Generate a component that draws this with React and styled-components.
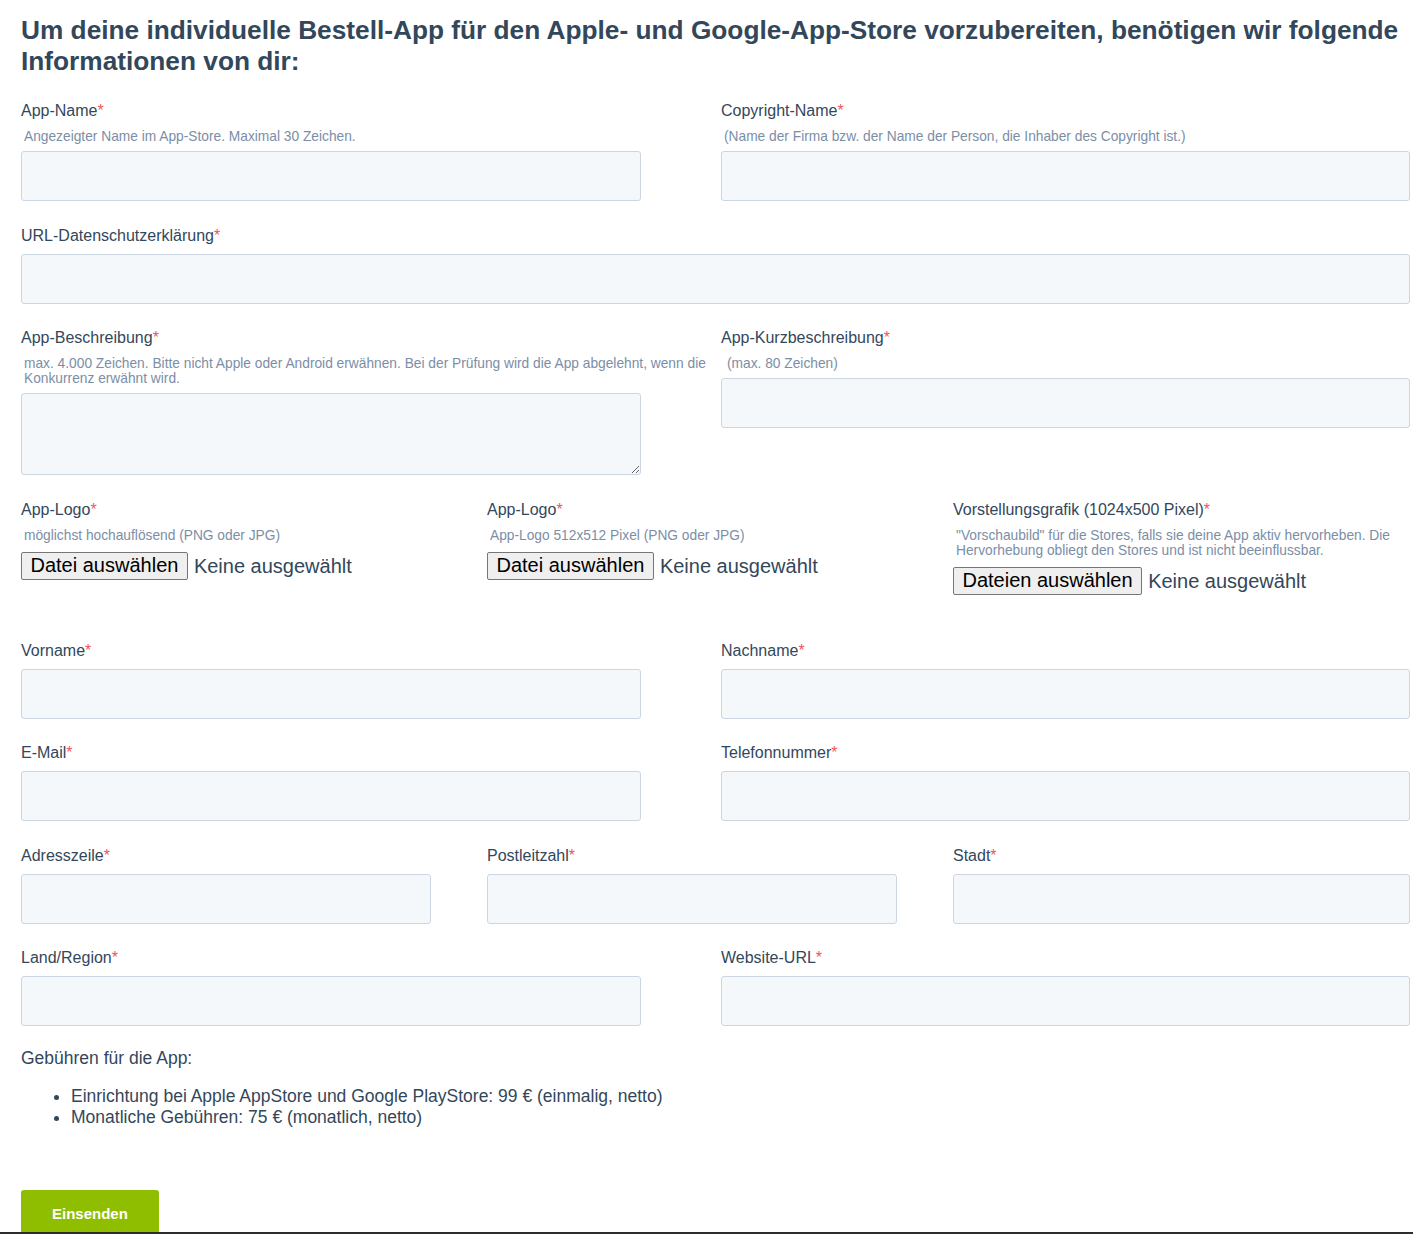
import React from 'react';
import styled, { createGlobalStyle } from 'styled-components';

const GlobalStyle = createGlobalStyle`
  html, body {
    margin: 0;
    padding: 0;
    background: #fff;
  }

  body {
    font-family: 'Liberation Sans', Arial, sans-serif;
    color: #33475b;
  }

  * {
    box-sizing: border-box;
  }
`;

const Page = styled.div`
  width: 1413px;
  overflow: hidden;
`;

const Form = styled.form`
  padding: 15px 0 0 21px;
  width: 1413px;
`;

const Heading = styled.h2`
  margin: 0 0 24px;
  font-size: 26.25px;
  line-height: 31px;
  font-weight: 700;
  color: #33475b;
`;

const columns = {
  1: '1389px',
  2: '700px 689px',
  3: '466px 466px 457px',
};

const Row = styled.div`
  display: grid;
  grid-template-columns: ${({ cols }) => columns[cols || 2]};
  align-items: start;
  margin-bottom: ${({ spacing }) => spacing || '24.5px'};
`;

const Field = styled.div`
  display: flex;
  flex-direction: column;
  min-width: 0;
`;

const Label = styled.label`
  font-size: 16px;
  line-height: 20px;
  margin-bottom: 8px;
  color: #33475b;

  span {
    color: #f2545b;
  }
`;

const Help = styled.div`
  font-size: 13.75px;
  line-height: 15px;
  color: #7c8ea6;
  padding-left: ${({ indent }) => indent || '3px'};
  margin-bottom: 7px;
`;

const TextInput = styled.input`
  display: block;
  width: ${({ width }) => width || '100%'};
  height: 50px;
  padding: 0 15px;
  font-family: inherit;
  font-size: 16px;
  color: #33475b;
  background: #f5f8fa;
  border: 1px solid #cbd6e2;
  border-radius: 3px;
  outline: none;
`;

const TextArea = styled.textarea`
  display: block;
  width: ${({ width }) => width || '100%'};
  height: 82px;
  padding: 9px 15px;
  font-family: inherit;
  font-size: 16px;
  color: #33475b;
  background: #f5f8fa;
  border: 1px solid #cbd6e2;
  border-radius: 3px;
  outline: none;
  resize: both;
`;

const FilePicker = styled.div`
  display: flex;
  align-items: center;
  gap: 6px;
  margin-top: 2px;
  font-size: 20px;
  line-height: 28px;
`;

const FileButton = styled.button`
  height: 28px;
  padding: 0 8.5px;
  font-family: 'Liberation Sans', Arial, sans-serif;
  font-size: 20px;
  color: #000;
  background: #efefef;
  border: 1px solid #767676;
  border-radius: 2px;
`;

const FileState = styled.span`
  color: #33475b;
`;

const Fees = styled.div`
  font-size: 17.5px;
  color: #33475b;

  p {
    margin: 0;
    line-height: 20px;
  }

  ul {
    margin: 18.5px 0 0;
    padding-left: 50px;
  }

  li {
    line-height: 21px;
  }
`;

const Submit = styled.button`
  margin-top: 61.5px;
  height: 42px;
  padding: 5px 31px 0;
  font-family: 'Liberation Sans', Arial, sans-serif;
  font-size: 15px;
  font-weight: 700;
  color: #fff;
  background: #8fbe00;
  border: none;
  border-radius: 3px 3px 0 0;
  display: block;
`;

const Footer = styled.footer`
  height: 80px;
  background: #2d2d2d;
`;

const Req = ({ children, htmlFor }) => (
  <Label htmlFor={htmlFor}>
    {children}
    <span>*</span>
  </Label>
);

const TextField = ({ id, label, help, width }) => (
  <Field>
    <Req htmlFor={id}>{label}</Req>
    {help && <Help>{help}</Help>}
    <TextInput id={id} type="text" width={width} />
  </Field>
);

const FileField = ({ label, help, button }) => (
  <Field>
    <Req>{label}</Req>
    <Help>{help}</Help>
    <FilePicker>
      <FileButton type="button">{button}</FileButton>
      <FileState>Keine ausgewählt</FileState>
    </FilePicker>
  </Field>
);

const App = () => {
  return (
    <Page>
      <GlobalStyle />
      <Form onSubmit={(e) => e.preventDefault()}>
        <Heading>
          Um deine individuelle Bestell-App für den Apple- und Google-App-Store vorzubereiten,
          benötigen wir folgende Informationen von dir:
        </Heading>

        <Row>
          <TextField
            id="app-name"
            label="App-Name"
            help="Angezeigter Name im App-Store. Maximal 30 Zeichen."
            width="620px"
          />
          <TextField
            id="copyright"
            label="Copyright-Name"
            help="(Name der Firma bzw. der Name der Person, die Inhaber des Copyright ist.)"
          />
        </Row>

        <Row cols={1}>
          <TextField id="privacy-url" label="URL-Datenschutzerklärung" />
        </Row>

        <Row>
          <Field>
            <Req htmlFor="description">App-Beschreibung</Req>
            <Help>
              max. 4.000 Zeichen. Bitte nicht Apple oder Android erwähnen. Bei der Prüfung wird die
              App abgelehnt, wenn die Konkurrenz erwähnt wird.
            </Help>
            <TextArea id="description" width="620px" />
          </Field>
          <Field>
            <Req htmlFor="short">App-Kurzbeschreibung</Req>
            <Help indent="6px">(max. 80 Zeichen)</Help>
            <TextInput id="short" type="text" />
          </Field>
        </Row>

        <Row cols={3} spacing="46px">
          <FileField label="App-Logo" help="möglichst hochauflösend (PNG oder JPG)" button="Datei auswählen" />
          <FileField label="App-Logo" help="App-Logo 512x512 Pixel (PNG oder JPG)" button="Datei auswählen" />
          <FileField
            label="Vorstellungsgrafik (1024x500 Pixel)"
            help={'"Vorschaubild" für die Stores, falls sie deine App aktiv hervorheben. Die Hervorhebung obliegt den Stores und ist nicht beeinflussbar.'}
            button="Dateien auswählen"
          />
        </Row>

        <Row>
          <TextField id="firstname" label="Vorname" width="620px" />
          <TextField id="lastname" label="Nachname" />
        </Row>

        <Row>
          <TextField id="email" label="E-Mail" width="620px" />
          <TextField id="phone" label="Telefonnummer" />
        </Row>

        <Row cols={3}>
          <TextField id="address" label="Adresszeile" width="410px" />
          <TextField id="zip" label="Postleitzahl" width="410px" />
          <TextField id="city" label="Stadt" />
        </Row>

        <Row spacing="21.5px">
          <TextField id="country" label="Land/Region" width="620px" />
          <TextField id="website" label="Website-URL" />
        </Row>

        <Fees>
          <p>Gebühren für die App:</p>
          <ul>
            <li>Einrichtung bei Apple AppStore und Google PlayStore: 99 € (einmalig, netto)</li>
            <li>Monatliche Gebühren: 75 € (monatlich, netto)</li>
          </ul>
        </Fees>

        <Submit type="submit">Einsenden</Submit>
      </Form>
      <Footer />
    </Page>
  );
};

export default App;
